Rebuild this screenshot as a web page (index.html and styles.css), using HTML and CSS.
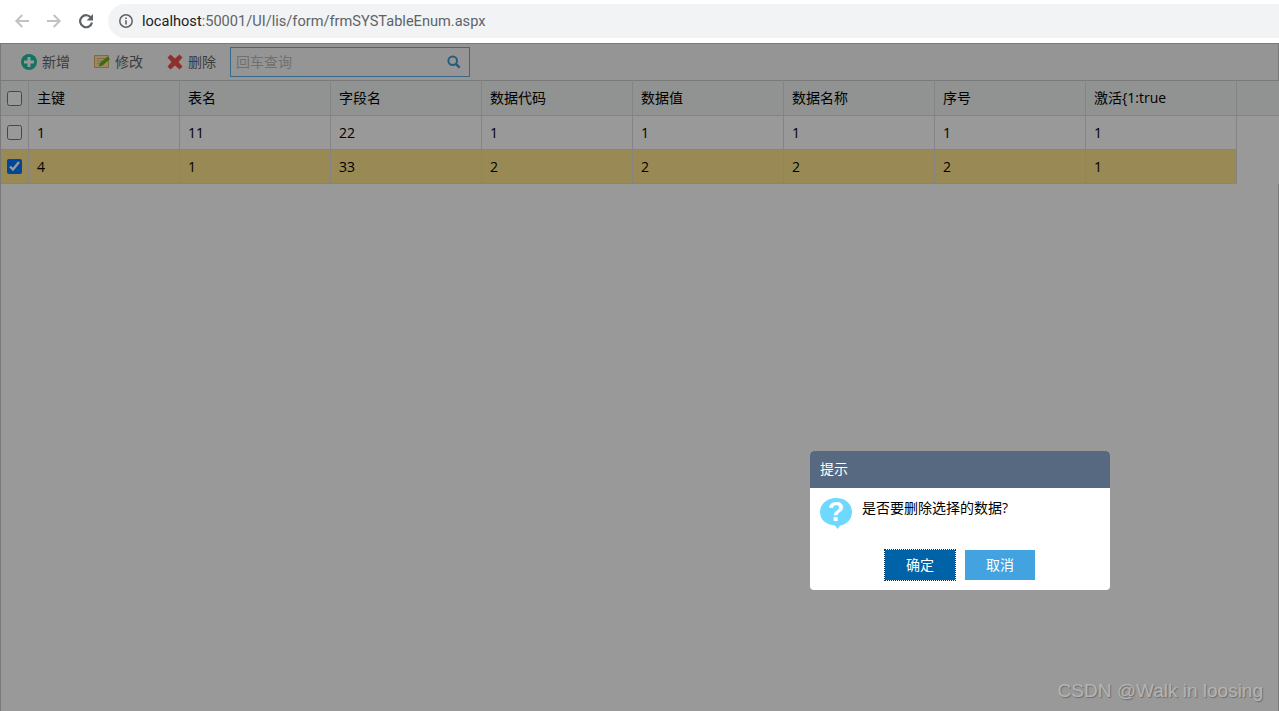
FILE: index.html
```html
<!DOCTYPE html>
<html lang="en">
<head>
    <meta charset="UTF-8">
    <title>frmSYSTableEnum</title>
    <link rel="stylesheet" href="styles.css">
</head>
<body>
    <div class="browser-bar">
        <svg class="nav-icon" viewBox="0 0 16 16"><path d="M15 8H2.500M8.300 2L2.300 8l6 6" fill="none" stroke="#c0c2c4" stroke-width="2"/></svg>
        <svg class="nav-icon" viewBox="0 0 16 16"><path d="M1 8h12.500M7.700 2l6 6-6 6" fill="none" stroke="#c0c2c4" stroke-width="2"/></svg>
        <svg class="nav-icon" viewBox="0 0 16 16"><path d="M13.200 5A6 6 0 1 0 14 9.500" fill="none" stroke="#5f6368" stroke-width="2.200"/><path d="M15 1v6.400H8.600z" fill="#5f6368"/></svg>
        <div class="address">
            <svg class="info-icon" viewBox="0 0 14 14"><circle cx="7" cy="7" r="6.200" fill="none" stroke="#5f6368" stroke-width="1.500"/><path d="M6.200 6.200h1.600v4.300H6.200zM6.200 3.500h1.600v1.600H6.200z" fill="#5f6368"/></svg>
            <span class="host">localhost</span><span class="url-rest">:50001/UI/lis/form/frmSYSTableEnum.aspx</span>
        </div>
    </div>

    <div class="page">
        <div class="toolbar">
            <a class="tool-btn">
                <svg class="tool-icon" viewBox="0 0 16 16"><circle cx="8" cy="8" r="8" fill="#22c09e"/><path d="M3 8h10M8 3v10" stroke="#fff" stroke-width="3"/></svg>
                <span class="tool-label">新增</span>
            </a>
            <a class="tool-btn">
                <svg class="tool-icon" viewBox="0 0 16 16"><path d="M.5 1.500h14v12H.5z" fill="#ffe3a6" stroke="#e0ae68"/><path d="M3 4.500h8M3 7h6M3 9.500h4" stroke="#e0b878"/><path d="M4.500 12.500l1.500-3.500L13.500 2.500l2.500 2.500-7.500 6.500z" fill="#5fb80f"/></svg>
                <span class="tool-label">修改</span>
            </a>
            <a class="tool-btn">
                <svg class="tool-icon" viewBox="0 0 16 16"><path d="M3.500.5L8 4.500 12.500.5 15.500 3.500 11.500 8l4 4.500-3 3L8 11.500l-4.500 4-3-3 4-4.500-4-4.500z" fill="#f0504a"/></svg>
                <span class="tool-label">删除</span>
            </a>
            <div class="search-box">
                <span class="search-text">回车查询</span>
                <svg class="search-icon" viewBox="0 0 14 14"><circle cx="5.700" cy="5.700" r="4.300" fill="none" stroke="#3c9ad6" stroke-width="2"/><path d="M8.800 8.800l3.800 3.800" stroke="#3c9ad6" stroke-width="2.400"/></svg>
            </div>
        </div>

        <table class="grid">
            <thead>
                <tr>
                    <th class="check-col"><input type="checkbox"></th>
                    <th>主键</th>
                    <th>表名</th>
                    <th>字段名</th>
                    <th>数据代码</th>
                    <th>数据值</th>
                    <th>数据名称</th>
                    <th>序号</th>
                    <th>激活{1:true</th>
                    <th class="filler"></th>
                </tr>
            </thead>
            <tbody>
                <tr>
                    <td class="check-col"><input type="checkbox"></td>
                    <td>1</td><td>11</td><td>22</td><td>1</td><td>1</td><td>1</td><td>1</td><td>1</td>
                </tr>
                <tr class="selected">
                    <td class="check-col"><input type="checkbox" checked></td>
                    <td>4</td><td>1</td><td>33</td><td>2</td><td>2</td><td>2</td><td>2</td><td>1</td>
                </tr>
            </tbody>
        </table>

        <div class="overlay"></div>

        <div class="dialog">
            <div class="dialog-title">提示</div>
            <div class="dialog-body">
                <div class="question">
                    <svg class="question-icon" viewBox="0 0 32 32"><path d="M16 0c9 0 16 5.500 16 14S25 27 20 27.500L17.500 31l-2.500-3.500C6.500 27 0 22 0 14S7 0 16 0z" fill="#6fd8ff"/></svg>
                    <span class="question-mark">?</span>
                </div>
                <span class="dialog-msg">是否要删除选择的数据?</span>
            </div>
            <div class="dialog-actions">
                <button class="btn btn-ok">确定</button>
                <button class="btn btn-cancel">取消</button>
            </div>
        </div>

        <div class="watermark">CSDN @Walk in loosing</div>
    </div>
</body>
</html>
```

FILE: styles.css
```css
* {
    margin: 0;
    padding: 0;
    box-sizing: border-box;
}

html, body {
    height: 100%;
    overflow: hidden;
}

body {
    font-family: "Open Sans", "Noto Sans CJK SC", sans-serif;
    font-size: 14px;
    color: #000;
    background: #fff;
    display: flex;
    flex-direction: column;
}

.browser-bar {
    height: 43px;
    display: flex;
    align-items: center;
    padding: 0 0 2px 14px;
    gap: 16px;
    background: #fff;
}

.nav-icon {
    width: 16px;
    height: 16px;
}

.address {
    flex: 1;
    height: 34px;
    margin-left: -2px;
    padding-left: 11px;
    display: flex;
    align-items: center;
    background: #f1f3f4;
    border-radius: 17px 0 0 17px;
    font-family: "Roboto", sans-serif;
    font-size: 14.6px;
}

.info-icon {
    width: 14px;
    height: 14px;
    margin-right: 9px;
}

.host {
    color: #202124;
}

.url-rest {
    color: #5f6368;
}

.page {
    flex: 1;
    position: relative;
    border: 1px solid #ccc;
    border-bottom: none;
    background: #fff;
}

.toolbar {
    height: 36px;
    display: flex;
    align-items: center;
    padding-left: 20px;
    background: #f9f9f9;
}

.tool-btn {
    display: flex;
    align-items: center;
    gap: 5px;
    margin-right: 24px;
    color: #666;
    font-size: 14px;
}

.tool-btn:nth-child(3) {
    margin-right: 14px;
}

.tool-label {
    padding-bottom: 2px;
}

.tool-icon {
    width: 16px;
    height: 16px;
}

.search-box {
    width: 240px;
    height: 30px;
    display: flex;
    align-items: center;
    justify-content: space-between;
    padding: 0 8px 0 5px;
    border: 1px solid #5fb0e8;
    background: #f9f9f9;
}

.search-text {
    color: #bbb;
    font-size: 14px;
    padding-bottom: 2px;
}

.search-icon {
    width: 14px;
    height: 14px;
}

.grid {
    border-collapse: collapse;
    table-layout: fixed;
    width: 1278px;
    background: #fff;
}

.grid th,
.grid td {
    width: 151px;
    padding: 0 8px 0 8.500px;
    border: 1px solid #ddd;
    text-align: left;
    font-weight: normal;
    white-space: nowrap;
}

.grid th {
    height: 35px;
    padding-bottom: 2px;
    background: #f0f5f3;
    border-top-color: #ccc;
}

.grid td {
    height: 34px;
}

.grid .check-col {
    width: 27px;
    padding: 0 0 0 6px;
    border-left: none;
}

.grid .filler {
    width: auto;
    border-right: none;
}

.grid input {
    display: block;
    width: 15px;
    height: 15px;
}

.selected td {
    background: #ffe48d;
}

.overlay {
    position: absolute;
    inset: -1px;
    background: rgba(0, 0, 0, 0.4);
}

.dialog {
    position: absolute;
    left: 809px;
    top: 407px;
    width: 300px;
    height: 139px;
    background: #fff;
    border-radius: 4px;
    overflow: hidden;
}

.dialog-title {
    height: 37px;
    line-height: 35px;
    padding-left: 10px;
    background: #566981;
    color: #fff;
    font-size: 14px;
}

.dialog-body {
    height: 62px;
    display: flex;
    align-items: flex-start;
    gap: 10px;
    padding: 10px 10px 0;
}

.question {
    position: relative;
    width: 32px;
    height: 32px;
}

.question-icon {
    display: block;
    width: 32px;
    height: 32px;
}

.question-mark {
    position: absolute;
    inset: 0 0 3px 0;
    text-align: center;
    line-height: 29px;
    font-family: "Liberation Sans", sans-serif;
    font-size: 27px;
    font-weight: bold;
    color: #fff;
}

.dialog-msg {
    font-size: 14px;
    line-height: 19px;
}

.dialog-actions {
    display: flex;
    justify-content: center;
    gap: 10px;
}

.btn {
    width: 70px;
    height: 30px;
    padding-bottom: 2px;
    border: none;
    color: #fff;
    font-family: inherit;
    font-size: 14px;
}

.btn-ok {
    background: #0063a8;
    outline: 1px dotted #00355a;
}

.btn-cancel {
    background: #42a3e0;
}

.watermark {
    position: absolute;
    right: 15px;
    bottom: 9px;
    font-family: "Liberation Sans", sans-serif;
    font-size: 19px;
    color: #b4b4b4;
    text-shadow: 1px 1px 1px #6e6e6e;
}
```
